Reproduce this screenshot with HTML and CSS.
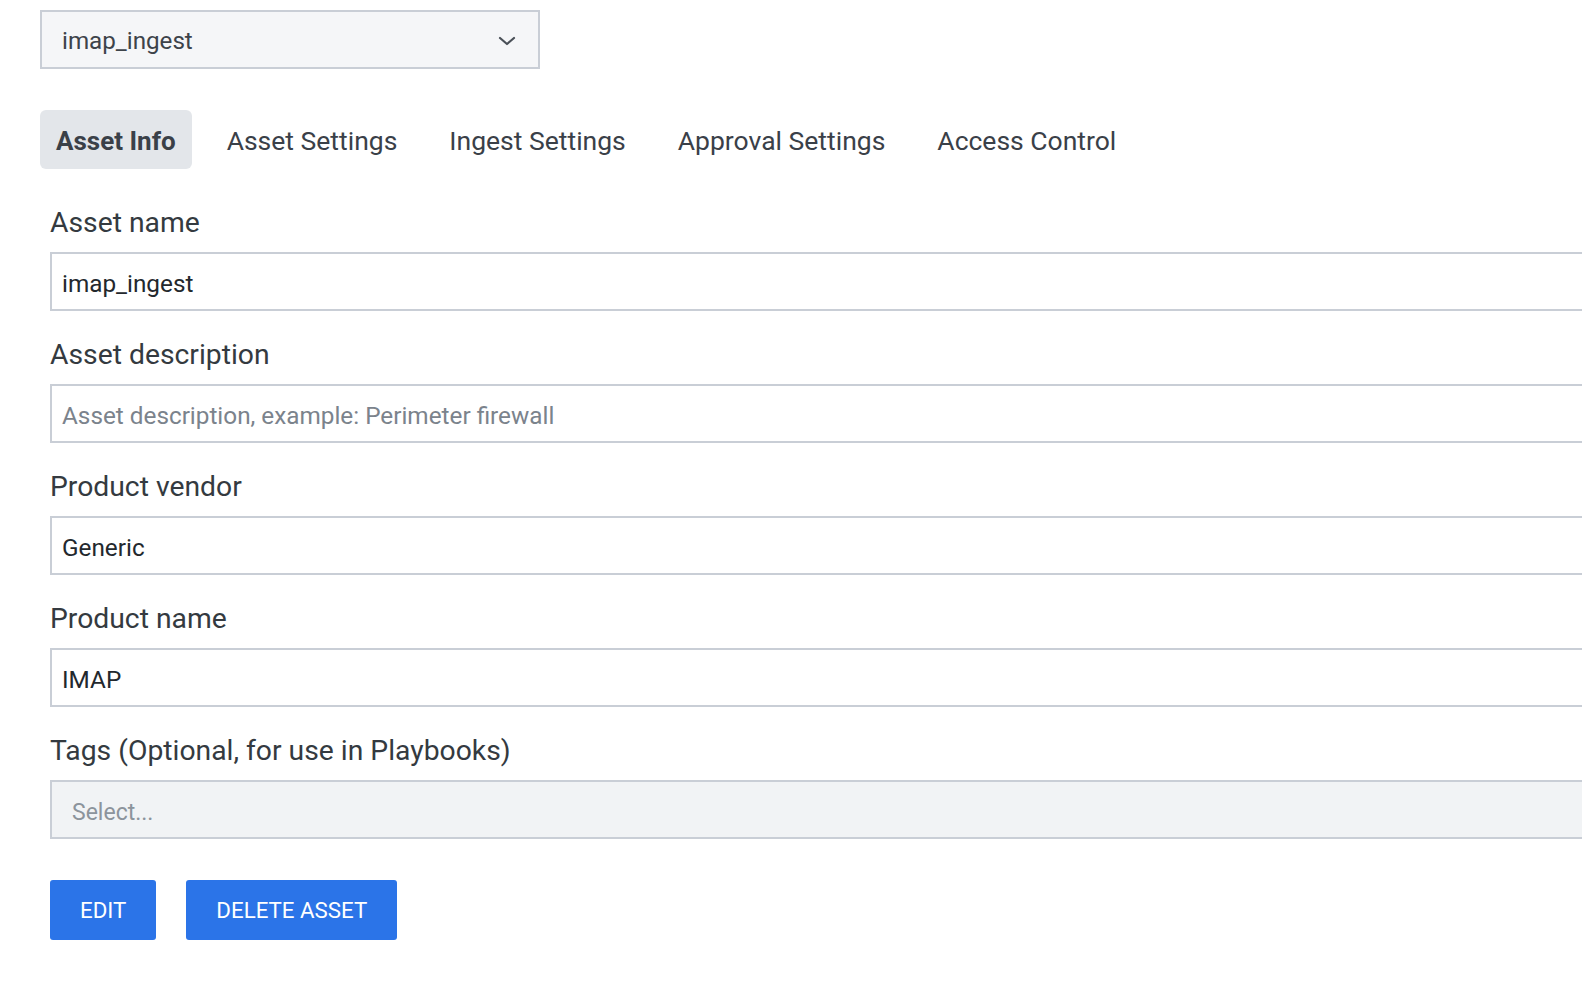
FILE: index.html
```html
<!DOCTYPE html>
<html>
<head>
<meta charset="utf-8">
<link rel="stylesheet" href="styles.css">
</head>
<body>
<div class="page">
  <div class="asset-select">
    <span class="asset-select-value">imap_ingest</span>
    <svg class="chevron" width="18" height="10" viewBox="0 0 18 10"><polyline points="2,2 9,8 16,2" fill="none" stroke="#4a5058" stroke-width="2.2" stroke-linecap="round" stroke-linejoin="round"/></svg>
  </div>

  <nav class="tabs">
    <div class="tab active">Asset Info</div>
    <div class="tab">Asset Settings</div>
    <div class="tab">Ingest Settings</div>
    <div class="tab">Approval Settings</div>
    <div class="tab">Access Control</div>
  </nav>

  <form class="form">
    <div class="field">
      <label class="label">Asset name</label>
      <div class="input">imap_ingest</div>
    </div>
    <div class="field">
      <label class="label">Asset description</label>
      <div class="input placeholder">Asset description, example: Perimeter firewall</div>
    </div>
    <div class="field">
      <label class="label">Product vendor</label>
      <div class="input">Generic</div>
    </div>
    <div class="field">
      <label class="label">Product name</label>
      <div class="input">IMAP</div>
    </div>
    <div class="field">
      <label class="label">Tags (Optional, for use in Playbooks)</label>
      <div class="input tags">Select...</div>
    </div>
    <div class="actions">
      <button type="button" class="btn">EDIT</button>
      <button type="button" class="btn">DELETE ASSET</button>
    </div>
  </form>
</div>
</body>
</html>
```

FILE: styles.css
```css
html, body {
  margin: 0;
  padding: 0;
  background: #ffffff;
  overflow: hidden;
}
body {
  font-family: Roboto, "Liberation Sans", Arial, sans-serif;
  color: #343a40;
}
.page {
  padding: 10px 0 0 40px;
}
.asset-select {
  box-sizing: border-box;
  width: 500px;
  height: 59px;
  border: 2px solid #c9ced6;
  background: #f5f6f8;
  display: flex;
  align-items: center;
  justify-content: space-between;
  padding: 3px 22px 0 20px;
}
.asset-select-value {
  font-size: 24.2px;
  color: #3d434a;
}
.chevron {
  display: block;
}
.tabs {
  display: flex;
  gap: 18px;
  margin-top: 41px;
}
.tab {
  box-sizing: border-box;
  height: 59px;
  padding: 2px 17px 0;
  line-height: 57px;
  font-size: 26.5px;
  color: #3a4048;
  border-radius: 6px;
}
.tab.active {
  background: #e3e6ea;
  font-weight: 700;
  font-size: 26px;
  padding: 4px 16px 0;
  line-height: 55px;
}
.form {
  padding-left: 10px;
  margin-top: 37px;
}
.field {
  margin-bottom: 27px;
}
.label {
  display: block;
  font-size: 28.3px;
  line-height: 34px;
  color: #343a40;
  margin-bottom: 12px;
}
.input {
  box-sizing: border-box;
  width: 1560px;
  height: 59px;
  border: 2px solid #c9ced6;
  background: #ffffff;
  display: flex;
  align-items: center;
  padding: 3px 0 0 10px;
  font-size: 24.3px;
  color: #23282d;
}
.input.placeholder {
  color: #7b838c;
}
.input.tags {
  background: #f1f3f5;
  color: #8c949c;
  padding: 5px 0 0 20px;
  font-size: 23px;
}
.actions {
  display: flex;
  gap: 30px;
  margin-top: 41px;
}
.btn {
  height: 60px;
  padding: 0 30px;
  border: none;
  border-radius: 3px;
  background: #2b74e8;
  color: #ffffff;
  font-family: Roboto, "Liberation Sans", Arial, sans-serif;
  font-size: 22.3px;
  font-weight: 400;
}
```
